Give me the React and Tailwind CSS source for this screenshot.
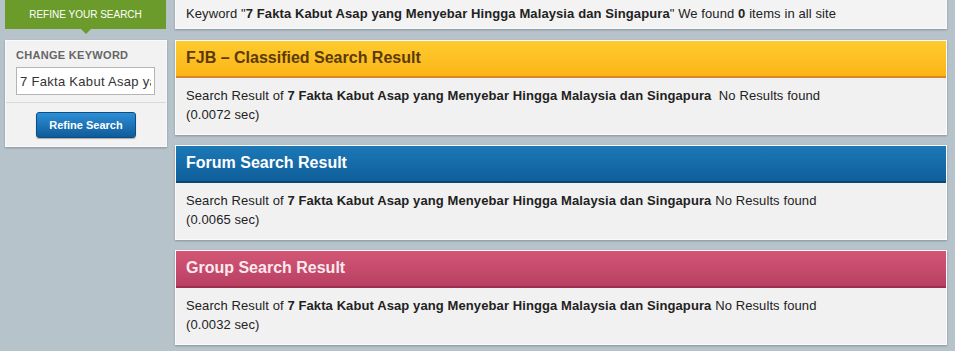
const KW = "7 Fakta Kabut Asap yang Menyebar Hingga Malaysia dan Singapura";

const results = [
  {
    title: "FJB – Classified Search Result",
    head: "bg-gradient-to-b from-[#fecb2e] to-[#fcb416] text-[#5a3b08] border-b-2 border-[#d8862a]",
    time: "0.0072",
    gap: "\u00a0\u00a0",
  },
  {
    title: "Forum Search Result",
    head: "bg-gradient-to-b from-[#1c78b6] to-[#0f5f9b] text-white border-b-2 border-[#0b4670]",
    time: "0.0065",
    gap: " ",
  },
  {
    title: "Group Search Result",
    head: "bg-gradient-to-b from-[#d35676] to-[#b94062] text-[#fbe9ee] border-b-2 border-[#9c2f4f]",
    time: "0.0032",
    gap: " ",
  },
];

export default function App() {
  return (
    <div className="w-[955px] h-[351px] overflow-hidden bg-[#b6c3cb] font-['Liberation_Sans',Arial,sans-serif] text-[13px] tracking-[0.1px] text-[#222]">
      <div className="flex gap-[8px] pl-[5px]">
        <aside className="w-[162px] flex flex-col gap-[11px]">
          <div className="relative h-[29px] w-[161px] bg-[#6b9c2b] flex items-center justify-center text-white text-[10px] tracking-normal uppercase">
            Refine your search
            <span className="absolute left-[76px] top-[29px] w-0 h-0 border-l-[5px] border-r-[5px] border-t-[5px] border-l-transparent border-r-transparent border-t-[#6b9c2b]" />
          </div>
          <div className="bg-[#f2f2f2] border border-[#fafafa] shadow-[0_1px_2px_rgba(0,0,0,0.25)] h-[107px]">
            <div className="px-[10px] pt-[8px] pb-[7px]">
              <p className="text-[11px] font-bold uppercase tracking-[0.3px] text-[#666] leading-[13px]">Change keyword</p>
              <input
                readOnly
                value={KW}
                className="mt-[5px] w-[139px] h-[28px] border border-[#b5b5b5] bg-white px-[3px] text-[13px] tracking-[0.3px] text-[#333] outline-none"
              />
            </div>
            <div className="border-t border-[#dadada] flex justify-center pt-[9px]">
              <button className="w-[100px] h-[26px] rounded-[3px] border border-[#0c4c80] bg-gradient-to-b from-[#2d8fd6] to-[#0f5c9b] text-white text-[11px] tracking-normal font-bold shadow-[0_1px_1px_rgba(0,0,0,0.3)]">
                Refine Search
              </button>
            </div>
          </div>
        </aside>

        <main className="w-[772px] flex flex-col gap-[10px]">
          <div className="h-[30px] -mt-px bg-[#f3f3f3] border border-[#fafafa] shadow-[0_1px_2px_rgba(0,0,0,0.25)] flex items-center px-[10px] mb-px">
            <span>
              Keyword "<b>{KW}</b>" We found <b>0</b> items in all site
            </span>
          </div>
          {results.map((r) => (
            <section
              key={r.title}
              className="h-[95px] bg-[#f1f1f1] border border-[#fbfbfb] shadow-[0_1px_2px_rgba(0,0,0,0.25)]"
            >
              <div className={`h-[37px] px-[10px] pb-px flex items-center text-[16px] tracking-normal font-bold ${r.head}`}>
                {r.title}
              </div>
              <div className="px-[10px] pt-[8px] leading-[19px]">
                <p>
                  Search Result of <b>{KW}</b>
                  {r.gap}No Results found
                </p>
                <p>({r.time} sec)</p>
              </div>
            </section>
          ))}
        </main>
      </div>
    </div>
  );
}
